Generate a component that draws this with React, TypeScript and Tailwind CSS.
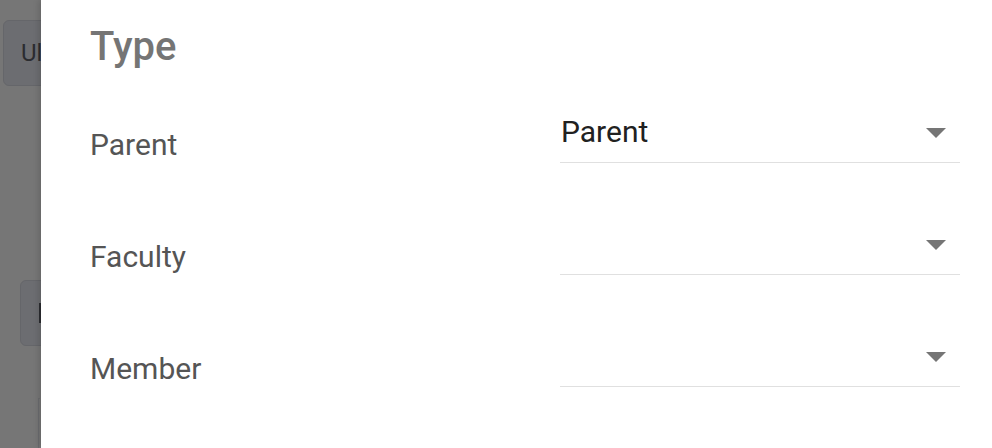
import React from 'react';

const rows = [
  { label: 'Parent', value: 'Parent' },
  { label: 'Faculty', value: '' },
  { label: 'Member', value: '' },
];

const Caret = () => (
  <svg width="20" height="10" viewBox="0 0 20 10" className="shrink-0">
    <path d="M0 0 L20 0 L10 10 Z" fill="#757575" />
  </svg>
);

const SelectRow: React.FC<{ label: string; value: string }> = ({ label, value }) => (
  <div className="flex h-[112px]">
    <div className="w-[470px] pt-[78px] text-[30px] leading-8 text-[#555555]">{label}</div>
    <div className="w-[400px] flex flex-col">
      <div className="mt-[65px] flex items-start justify-between border-b border-[#e0e0e0] pb-[14px] pr-[14px]">
        <span className="h-8 pl-[1px] text-[30px] leading-8 text-[#212121]">{value}</span>
        <span className="pt-[12px]"><Caret /></span>
      </div>
    </div>
  </div>
);

export default function App() {
  return (
    <div className="flex h-[448px] w-[992px] overflow-hidden bg-[#767676] font-['Roboto',sans-serif]">
      {/* backdrop behind the drawer */}
      <div className="w-[41px] shrink-0 overflow-hidden">
        <div className="ml-[3px] mt-[20px] flex h-[66px] w-[60px] items-center rounded-md border border-[#65666a] bg-[#6c6d71] pl-[17px] text-[24px] text-[#2b2c30]">
          Ul
        </div>
        <div className="ml-[20px] mt-[194px] flex h-[66px] w-[60px] items-center rounded-md border border-[#65666a] bg-[#6c6d71] pl-[18px]">
          <span className="h-[20px] w-[3px] bg-[#2b2c30]" />
        </div>
        <div className="ml-[38px] mt-[52px] h-[60px] w-[2px] rounded-t border-l border-t border-[#6a6b6e]" />
      </div>

      {/* drawer */}
      <div className="flex-1 bg-white pl-[49px] shadow-[-2px_0_6px_rgba(0,0,0,0.15)]">
        <h2 className="mt-[25px] h-[44px] text-[40px] font-medium leading-[44px] text-[#757575]">Type</h2>
        <div className="-mt-[18px]">
          {rows.map(r => (
            <SelectRow key={r.label} label={r.label} value={r.value} />
          ))}
        </div>
      </div>
    </div>
  );
}
